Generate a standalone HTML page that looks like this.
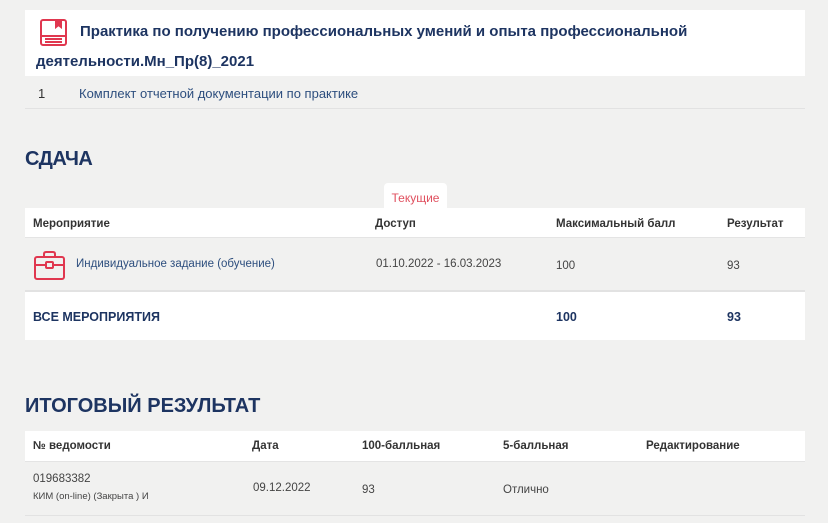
<!DOCTYPE html>
<html><head><meta charset="utf-8"><style>
*{margin:0;padding:0;box-sizing:border-box}
body{width:828px;height:523px;background:#f1f1f0;font-family:"Liberation Sans","DejaVu Sans",sans-serif;position:relative;overflow:hidden;color:#333}
.a{position:absolute}
.w{background:#fff}
.navy{color:#1d3461}
.link{color:#2d4e7e}
</style></head><body>
<div class="a w" style="left:25px;top:10px;width:780px;height:66px"></div>
<svg class="a" style="left:39px;top:18px" width="30" height="30" viewBox="0 0 30 30" fill="none" stroke="#e0374f" stroke-width="2"><rect x="2" y="2" width="25" height="25" rx="2"/><path d="M2 18H27M6 21H23M6 24H23" /><path d="M17 2V9L19.5 7L22 9V2" fill="#e0374f"/></svg>
<div class="a navy" style="left:80px;top:23px;font-size:15px;font-weight:bold;">Практика по получению профессиональных умений и опыта профессиональной</div>
<div class="a navy" style="left:36px;top:53px;font-size:15px;font-weight:bold;">деятельности.Мн_Пр(8)_2021</div>
<div class="a" style="left:25px;top:108px;width:780px;height:1px;background:#e2e2e2"></div>
<div class="a" style="left:38px;top:86px;font-size:13px">1</div>
<div class="a link" style="left:79px;top:86px;font-size:13px">Комплект отчетной документации по практике</div>

<div class="a navy" style="left:25px;top:148px;font-size:20px;font-weight:bold;letter-spacing:-0.5px">СДАЧА</div>
<div class="a w" style="left:384px;top:183px;width:63px;height:26px;border-radius:4px 4px 0 0;color:#e0505f;font-size:12px;text-align:center;padding-top:8px">Текущие</div>
<div class="a w" style="left:25px;top:208px;width:780px;height:30px;border-bottom:1px solid #e4e4e4"></div>
<div class="a" style="left:33px;top:218px;font-size:11.5px;font-weight:bold;color:#333">Мероприятие</div>
<div class="a" style="left:375px;top:218px;font-size:11.5px;font-weight:bold;color:#333">Доступ</div>
<div class="a" style="left:556px;top:218px;font-size:11.5px;font-weight:bold;color:#333">Максимальный балл</div>
<div class="a" style="left:727px;top:218px;font-size:11.5px;font-weight:bold;color:#333">Результат</div>
<svg class="a" style="left:33px;top:250px" width="33" height="31" viewBox="0 0 33 31" fill="none" stroke="#e0374f" stroke-width="2"><rect x="2" y="7" width="29" height="22" rx="2"/><path d="M11 7V4Q11 2 13 2H20Q22 2 22 4V7M2 15H13M20 15H31"/><rect x="13" y="12" width="7" height="6" rx="1"/></svg>
<div class="a link" style="left:76px;top:258px;font-size:11.5px">Индивидуальное задание (обучение)</div>
<div class="a" style="left:376px;top:258px;font-size:11.5px;color:#444">01.10.2022 - 16.03.2023</div>
<div class="a" style="left:556px;top:260px;font-size:11.5px;color:#444">100</div>
<div class="a" style="left:727px;top:260px;font-size:11.5px;color:#444">93</div>
<div class="a" style="left:25px;top:290px;width:780px;height:2px;background:#e2e2e2"></div>
<div class="a w" style="left:25px;top:292px;width:780px;height:48px"></div>
<div class="a navy" style="left:33px;top:310px;font-size:12.5px;font-weight:bold">ВСЕ МЕРОПРИЯТИЯ</div>
<div class="a navy" style="left:556px;top:310px;font-size:12.5px;font-weight:bold">100</div>
<div class="a navy" style="left:727px;top:310px;font-size:12.5px;font-weight:bold">93</div>

<div class="a navy" style="left:25px;top:395px;font-size:20px;font-weight:bold;letter-spacing:0px">ИТОГОВЫЙ РЕЗУЛЬТАТ</div>
<div class="a w" style="left:25px;top:431px;width:780px;height:31px;border-bottom:1px solid #e4e4e4"></div>
<div class="a" style="left:33px;top:440px;font-size:11.5px;font-weight:bold;color:#333">№ ведомости</div>
<div class="a" style="left:252px;top:440px;font-size:11.5px;font-weight:bold;color:#333">Дата</div>
<div class="a" style="left:362px;top:440px;font-size:11.5px;font-weight:bold;color:#333">100-балльная</div>
<div class="a" style="left:503px;top:440px;font-size:11.5px;font-weight:bold;color:#333">5-балльная</div>
<div class="a" style="left:646px;top:440px;font-size:11.5px;font-weight:bold;color:#333">Редактирование</div>
<div class="a" style="left:33px;top:473px;font-size:11.5px;color:#444">019683382</div>
<div class="a" style="left:33px;top:491px;font-size:9.5px;color:#444">КИМ (on-line) (Закрыта ) И</div>
<div class="a" style="left:253px;top:482px;font-size:11.5px;color:#444">09.12.2022</div>
<div class="a" style="left:362px;top:484px;font-size:11.5px;color:#444">93</div>
<div class="a" style="left:503px;top:484px;font-size:11.5px;color:#444">Отлично</div>
<div class="a" style="left:25px;top:515px;width:780px;height:1px;background:#e2e2e2"></div>
</body></html>
